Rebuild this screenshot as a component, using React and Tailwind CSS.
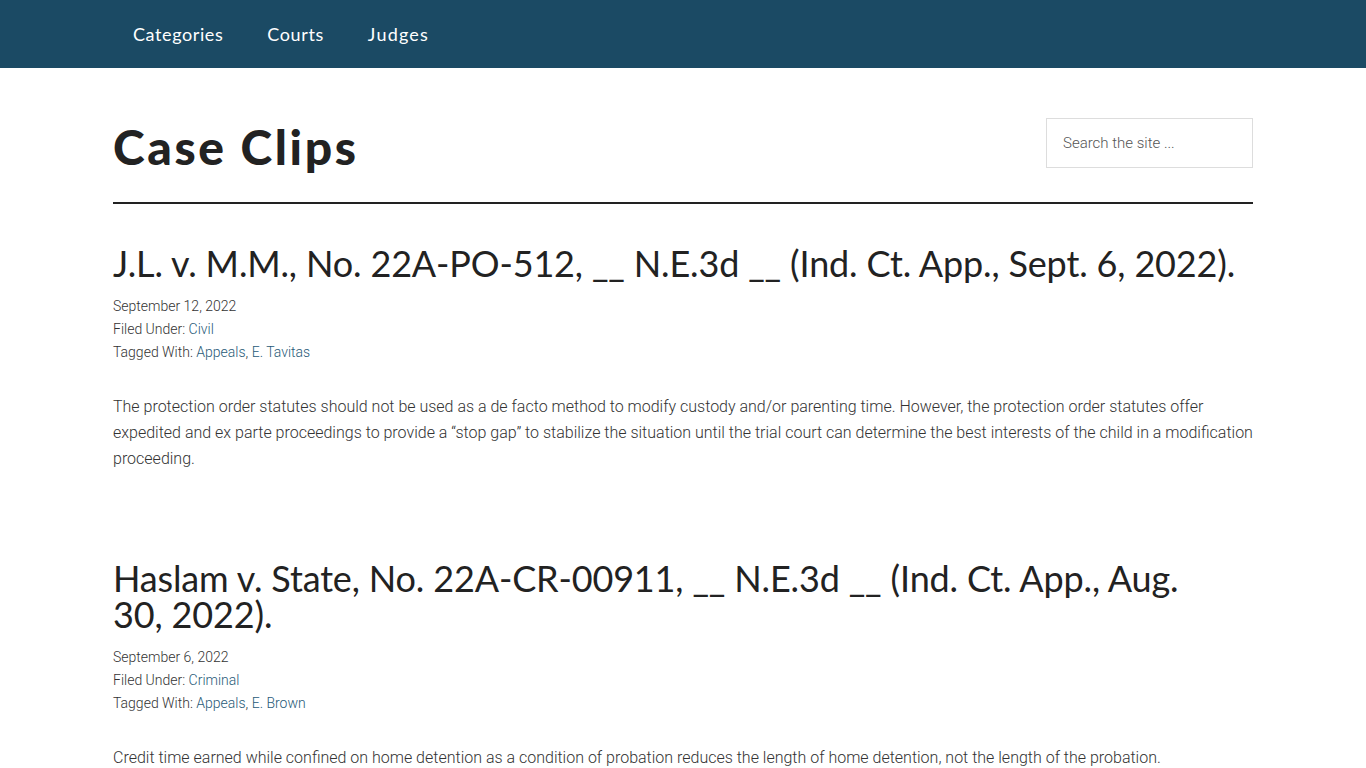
import React from "react";

const posts = [
  {
    title: "J.L. v. M.M., No. 22A-PO-512, __ N.E.3d __ (Ind. Ct. App., Sept. 6, 2022).",
    date: "September 12, 2022",
    cat: "Civil",
    tags: ["Appeals", "E. Tavitas"],
    body:
      "The protection order statutes should not be used as a de facto method to modify custody and/or parenting time. However, the protection order statutes offer expedited and ex parte proceedings to provide a \u201cstop gap\u201d to stabilize the situation until the trial court can determine the best interests of the child in a modification proceeding.",
  },
  {
    title: "Haslam v. State, No. 22A-CR-00911, __ N.E.3d __ (Ind. Ct. App., Aug. 30,\u00a02022).",
    date: "September 6, 2022",
    cat: "Criminal",
    tags: ["Appeals", "E. Brown"],
    body:
      "Credit time earned while confined on home detention as a condition of probation reduces the length of home detention, not the length of the probation.",
  },
];

const heading = { fontFamily: "Lato, 'Open Sans', sans-serif" };
const body = { fontFamily: "Roboto, 'Liberation Sans', sans-serif" };

export default function App() {
  return (
    <div className="min-h-screen bg-white text-[#333]" style={body}>
      <header className="h-[68px] bg-[#1b4a64]">
        <nav className="w-[1140px] mx-auto h-full flex items-center pl-[20px] gap-[44px] text-[18px] tracking-[0.6px] text-white" style={heading}>
          <a className="leading-[66px]">Categories</a>
          <a className="leading-[66px]">Courts</a>
          <a className="leading-[66px] tracking-[1.2px]">Judges</a>
        </nav>
      </header>
      <main className="w-[1140px] mx-auto">
        <div className="flex justify-between items-start pt-[50px] h-[100px]">
          <h1 className="text-[48px] leading-[50px] pt-[4px] font-black text-[#222] tracking-[2.6px]" style={heading}>
            Case Clips
          </h1>
          <div className="w-[207px] h-[50px] border border-[#ddd] flex items-center pl-[16px] text-[15px] font-light text-[#555]">
            Search the site ...
          </div>
        </div>
        <div className="mt-[34px] h-[2px] bg-[#222]"></div>
        <div className="pt-[41px]">
          {posts.map((p, i) => (
            <article key={i} className="mb-[88px]">
              <h2 className="text-[36px] leading-[36px] font-normal text-[#222] mb-[14px] tracking-[-0.15px]" style={heading}>
                {p.title}
              </h2>
              <div className="text-[14px] leading-[23px] font-light text-[#333] mb-[30px]">
                <p>{p.date}</p>
                <p>
                  Filed Under: <a className="text-[#285a78]">{p.cat}</a>
                </p>
                <p>
                  Tagged With: <a className="text-[#285a78]">{p.tags[0]}</a>, <a className="text-[#285a78]">{p.tags[1]}</a>
                </p>
              </div>
              <p className="text-[16px] leading-[26px] font-light text-[#333]">{p.body}</p>
            </article>
          ))}
        </div>
      </main>
    </div>
  );
}
